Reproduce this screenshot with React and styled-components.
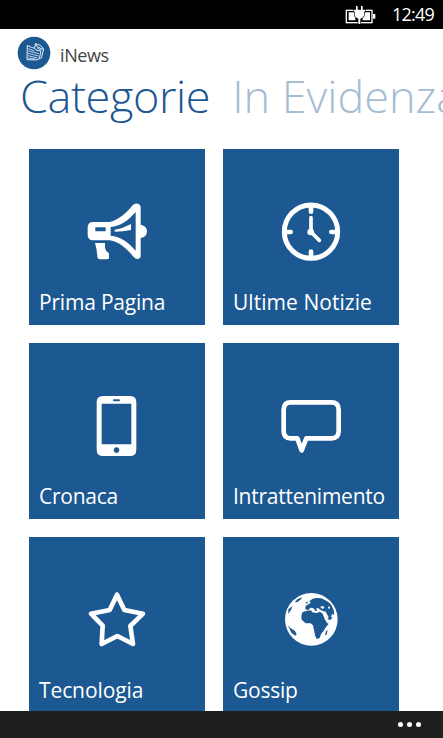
import React from 'react';
import styled, { createGlobalStyle } from 'styled-components';

const theme = {
  primary: '#1c5891',
  faded: '#a5bdd3',
  white: '#fff',
  black: '#000',
  bar: '#1f1f1f',
  text: '#444',
};

const categories = [
  { name: 'Prima Pagina', icon: 'megaphone', tracking: -0.2 },
  { name: 'Ultime Notizie', icon: 'clock', tracking: 0.05 },
  { name: 'Cronaca', icon: 'phone', tracking: -0.25 },
  { name: 'Intrattenimento', icon: 'bubble', tracking: -0.25 },
  { name: 'Tecnologia', icon: 'star', tracking: -0.1 },
  { name: 'Gossip', icon: 'globe', tracking: -0.25 },
];

const icons = {
  megaphone: {
    viewBox: '-9 -7 300 270',
    art: (
      <>
        <path
          fillRule="evenodd"
          d="M70 98H119C147 92 168 72 188 48Q196 39 206 44Q212 47 212 54V106Q231 110 231 126Q231 143 212 146V199Q212 206 206 208Q199 212 192 204C171 179 149 158 119 153H70Q53 153 53 137V114Q53 98 70 98ZM76 114V126H107V114ZM122 113V139C151 141 174 158 197 184V68C174 94 151 111 122 113Z"
        />
        <path d="M134 121Q160 117 183 104V122Q159 127 134 127Z" />
        <path d="M75 161H105V176Q106 185 117 192V207Q116 210 110 210H88Q83 209 82 203Q81 179 75 161Z" />
      </>
    ),
  },
  clock: {
    viewBox: '-12 -7 300 270',
    art: (
      <>
        <circle cx="138" cy="127" r="80" fill="none" stroke="currentColor" strokeWidth="15" />
        <g fill="none" stroke="currentColor" strokeLinecap="round">
          <path d="M138 55V67M138 187V200M65 128H77M199 128H210" strokeWidth="14" />
          <path d="M138 85V128L163 153" strokeWidth="11" strokeLinejoin="round" />
        </g>
        <circle cx="137" cy="128" r="10" />
      </>
    ),
  },
  phone: {
    viewBox: '-9 3 300 270',
    art: (
      <path
        fillRule="evenodd"
        d="M99 48H180Q199 48 199 67V209Q199 228 180 228H99Q80 228 80 209V67Q80 48 99 48ZM95 71V193H184V71ZM132 58Q129 58 129 61T132 64H147Q150 64 150 61T147 58ZM139.5 202A8.5 8.5 0 1 0 139.6 202Z"
      />
    ),
  },
  bubble: {
    viewBox: '-12 3 300 270',
    art: (
      <path
        d="M77 67H199Q221 67 221 89V153Q221 175 199 175H124L110 211L97 175H77Q56 175 56 153V89Q56 67 77 67Z"
        fill="none"
        stroke="currentColor"
        strokeWidth="14"
        strokeLinejoin="round"
      />
    ),
  },
  star: {
    viewBox: '-9 0 300 270',
    art: (
      <path
        d="M141 59L163 105L219 116L181 153L189 207L142 183L95 207L98 152L63 116L119 105Z"
        fill="none"
        stroke="currentColor"
        strokeWidth="14"
        strokeLinejoin="round"
      />
    ),
  },
  globe: {
    viewBox: '-12 0 300 270',
    art: (
      <>
        <circle cx="139" cy="133" r="79" />
        <g fill={theme.primary}>
          <path d="M112 112L126 107L138 106L142 112L155 114L165 110L173 116L179 132L186 144L191 146L181 159L176 167L168 178L164 189L155 192L150 181L147 165L144 151L137 145L122 145L110 134L109 123Z" />
          <path d="M121 103L122 92L131 88L138 82L132 79L143 71L154 69L169 70L181 76L191 82L199 90L206 105L208 120L202 116L198 124L202 129L194 136L187 130L180 116L175 109L166 104L159 99L153 101L157 107L151 108L145 99L136 98L130 105Z" />
          <path d="M121 84L128 79L127 87Z" />
          <path d="M89 82L97 73L112 67L108 73L98 81Z" />
          <path d="M70 103L83 93L79 103L70 117Z" />
          <path d="M68 149L75 158L90 168L95 178L91 182L79 173Z" />
          <path d="M183 169L188 165L185 179L180 181Z" />
        </g>
        <path d="M165 95L174 93L179 98L172 102Z" />
        <path d="M174 110L181 109L191 127L188 131Z" />
        <path d="M190 94L195 96L193 103L189 99Z" />
      </>
    ),
  },
};

const Battery = () => (
  <svg width="32" height="20" viewBox="0 0 96 60">
    <rect x="4" y="16" width="77" height="37" fill="none" stroke="#fff" strokeWidth="4" />
    <path d="M11 22H31V46H11ZM56 22H75V46H52Z" fill="#fff" />
    <path d="M84 27H91V41H84Z" fill="#fff" />
    <path
      d="M33 3H38V14H48V3H53V14H60V20H57V30Q56 38 46 41V57H40V41Q30 38 29 30V20H26V14H33Z"
      fill="#fff"
      stroke="#000"
      strokeWidth="4"
      paintOrder="stroke"
    />
  </svg>
);

// Folded newspaper inside a disc
const NewsLogo = () => (
  <svg width="34" height="34" viewBox="0 0 102 102">
    <circle cx="51" cy="51" r="49" fill={theme.primary} />
    <g fill="none" stroke="#e6eff7" strokeWidth="3" strokeLinejoin="round">
      <path d="M31 28L43 34L53 37L55 23L70 28L80 39L73 66L58 72L30 71Z" />
      <path d="M53 37L57 42L72 45L67 67M55 23L60 32L78 40" />
      <path d="M34 38L52 45M34 45L66 53M33 52L65 60M33 59L62 66M33 66L56 69M60 36L73 42" strokeWidth="2.4" />
    </g>
  </svg>
);

const App = () => (
  <Screen>
    <GlobalStyle />
    <StatusBar>
      <Battery />
      <Time>12:49</Time>
    </StatusBar>

    <Header>
      <NewsLogo />
      <AppName>iNews</AppName>
    </Header>

    <Pivot>
      <PivotTitle $active>Categorie</PivotTitle>
      <PivotTitle>In Evidenza</PivotTitle>
    </Pivot>

    <Grid>
      {categories.map(({ name, icon, tracking }) => (
        <Tile key={name}>
          <Icon viewBox={icons[icon].viewBox}>{icons[icon].art}</Icon>
          <Label $tracking={tracking}>{name}</Label>
        </Tile>
      ))}
    </Grid>

    <AppBar>
      <Dot />
      <Dot />
      <Dot />
    </AppBar>
  </Screen>
);

export default App;

const GlobalStyle = createGlobalStyle`
  body {
    margin: 0;
    background: ${theme.white};
    font-family: 'Open Sans', 'Noto Sans', sans-serif;
  }
`;

const Screen = styled.div`
  display: flex;
  flex-direction: column;
  width: 443px;
  height: 738px;
  overflow: hidden;
`;

const StatusBar = styled.div`
  display: flex;
  flex: none;
  align-items: center;
  justify-content: flex-end;
  gap: 15px;
  box-sizing: border-box;
  height: 29px;
  padding-right: 9px;
  color: ${theme.white};
  background: ${theme.black};
`;

const Time = styled.span`
  font-size: 18px;
  line-height: 29px;
  letter-spacing: -0.8px;
`;

const Header = styled.header`
  display: flex;
  flex: none;
  align-items: center;
  gap: 9px;
  height: 34px;
  padding: 7px 0 0 17px;
`;

const AppName = styled.span`
  padding-top: 4px;
  font-size: 18px;
  line-height: 24px;
  letter-spacing: -0.4px;
  color: ${theme.text};
`;

const Pivot = styled.nav`
  display: flex;
  flex: none;
  gap: 22px;
  height: 79px;
  padding-left: 20px;
  white-space: nowrap;
`;

const PivotTitle = styled.span`
  font-size: 45px;
  font-weight: ${props => (props.$active ? 330 : 300)};
  line-height: 52px;
  letter-spacing: ${props => (props.$active ? '-0.4px' : '0')};
  color: ${props => (props.$active ? theme.primary : theme.faded)};
`;

const Grid = styled.main`
  display: grid;
  flex: 1;
  grid-template-columns: 176px 176px;
  grid-auto-rows: 176px;
  gap: 18px;
  min-height: 0;
  padding-left: 29px;
  overflow: hidden;
`;

const Tile = styled.div`
  display: flex;
  flex-direction: column;
  align-items: center;
  box-sizing: border-box;
  padding-top: 38px;
  color: ${theme.white};
  background: ${theme.primary};
`;

const Icon = styled.svg`
  flex: none;
  width: 100px;
  height: 90px;
  fill: currentColor;
`;

const Label = styled.span`
  align-self: flex-start;
  margin-top: 10px;
  padding-left: 10px;
  font-size: 21px;
  line-height: 30px;
  letter-spacing: ${props => props.$tracking}px;
  white-space: nowrap;
`;

const AppBar = styled.footer`
  display: flex;
  flex: none;
  justify-content: flex-end;
  gap: 4px;
  box-sizing: border-box;
  height: 27px;
  padding: 11px 22px 0 0;
  background: ${theme.bar};
`;

const Dot = styled.span`
  width: 5px;
  height: 5px;
  border-radius: 50%;
  background: ${theme.white};
`;
